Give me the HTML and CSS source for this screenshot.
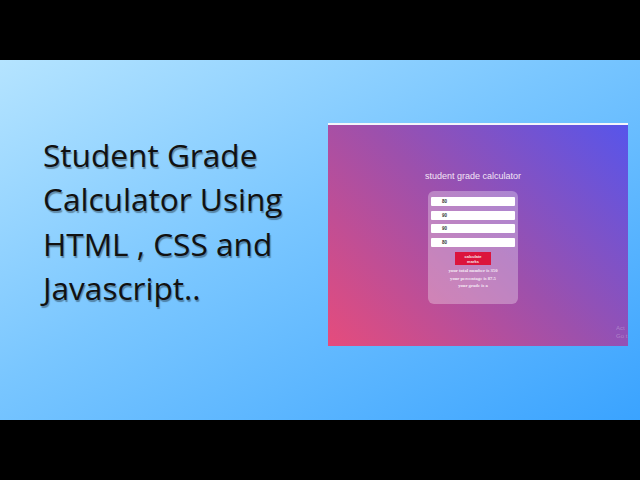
FILE: index.html
```html
<!DOCTYPE html>
<html lang="en">
<head>
  <meta charset="UTF-8">
  <title>Student Grade Calculator</title>
  <link rel="stylesheet" href="styles.css">
</head>
<body>
  <div class="slide">
    <h1 class="headline">Student Grade<br>Calculator Using<br>HTML , CSS and<br>Javascript..</h1>

    <div class="shot">
      <h2 class="shot-title">student grade calculator</h2>
      <div class="card">
        <div class="field">80</div>
        <div class="field">90</div>
        <div class="field">90</div>
        <div class="field">80</div>
        <div class="calc-btn">calculate<br>marks</div>
        <p class="result">your total number is 350</p>
        <p class="result">your percentage is 87.5</p>
        <p class="result">your grade is a</p>
      </div>
      <div class="watermark">Act<br>Go t</div>
    </div>
  </div>
</body>
</html>
```

FILE: styles.css
```css
html, body {
  margin: 0;
  height: 100%;
  background: #000;
}
body {
  padding: 60px 0;
  box-sizing: border-box;
  overflow: hidden;
}
.slide {
  height: 360px;
  background: linear-gradient(to bottom right, #b5e4ff 0%, #79c6ff 45%, #3aa3ff 100%);
  display: flex;
  justify-content: space-between;
  align-items: flex-start;
  padding: 63px 12px 0 43px;
  box-sizing: border-box;
}
.headline {
  margin: 10px 0 0;
  font-family: "Open Sans", sans-serif;
  font-size: 31.6px;
  line-height: 44.3px;
  font-weight: 400;
  color: #111;
  text-shadow: 1px 1.5px 1px rgba(0, 0, 0, 0.35);
  white-space: nowrap;
}
.shot {
  position: relative;
  width: 300px;
  height: 223px;
  box-sizing: border-box;
  border-top: 2px solid #f4f6fb;
  background: linear-gradient(45deg, #e54c7c 0%, #9d50ac 50%, #5755ea 100%);
  display: flex;
  flex-direction: column;
  align-items: center;
  padding: 46px 10px 0 0;
}
.shot-title {
  margin: 0;
  font-family: "Liberation Sans", sans-serif;
  font-size: 9px;
  line-height: 11px;
  font-weight: 400;
  color: #f3e6f5;
}
.card {
  width: 90px;
  height: 113px;
  margin-top: 9px;
  padding: 6px 3px 0;
  box-sizing: border-box;
  border-radius: 6px;
  background: rgba(255, 255, 255, 0.3);
  display: flex;
  flex-direction: column;
  align-items: center;
}
.field {
  width: 100%;
  height: 9px;
  margin-bottom: 4.6px;
  padding-left: 11px;
  box-sizing: border-box;
  background: #fff;
  border-radius: 1px;
  font-family: "Liberation Sans", sans-serif;
  font-size: 4.5px;
  line-height: 9px;
  font-weight: 700;
  color: #333;
}
.calc-btn {
  width: 36px;
  height: 13px;
  margin: 1px 0 2px;
  background: #dc143c;
  font-family: "Liberation Sans", sans-serif;
  font-size: 4px;
  line-height: 5px;
  padding-top: 1.5px;
  box-sizing: border-box;
  font-weight: 700;
  text-align: center;
  color: #f6e4ea;
}
.result {
  margin: 0;
  font-family: "Liberation Serif", serif;
  font-size: 4.7px;
  line-height: 7.5px;
  font-weight: 700;
  color: #f5e9f5;
  white-space: nowrap;
}
.watermark {
  position: absolute;
  left: 288px;
  top: 199px;
  font-family: "Liberation Sans", sans-serif;
  font-size: 6px;
  line-height: 8px;
  color: rgba(255, 255, 255, 0.28);
  white-space: nowrap;
}
```
